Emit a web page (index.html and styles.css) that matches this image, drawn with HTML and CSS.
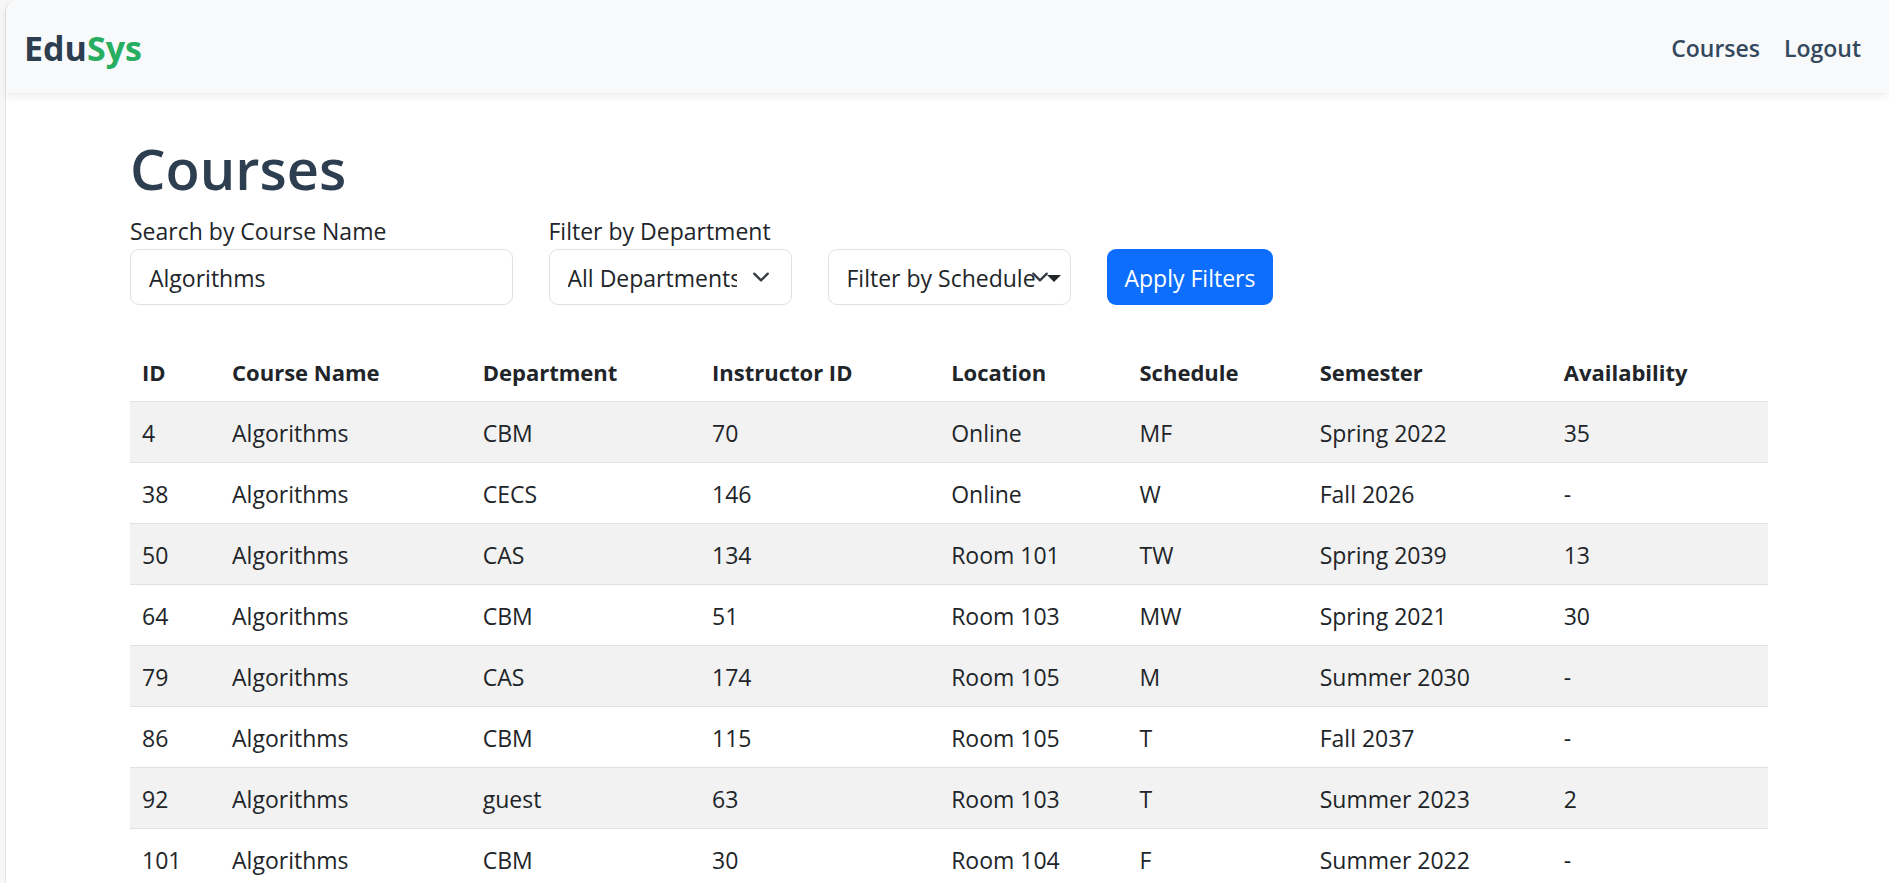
FILE: index.html
```html
<!DOCTYPE html>
<html lang="en">
<head>
<meta charset="utf-8">
<meta name="viewport" content="width=device-width, initial-scale=1">
<title>EduSys - Courses</title>
<link rel="stylesheet" href="styles.css">
</head>
<body>
<div class="page">
  <nav class="navbar">
    <a class="brand" href="#">Edu<span class="brand-accent">Sys</span></a>
    <div class="nav-links">
      <a class="nav-link" href="#">Courses</a>
      <a class="nav-link" href="#">Logout</a>
    </div>
  </nav>
  <main class="container">
    <h1 class="title">Courses</h1>
    <form class="filters">
      <div class="field field-name">
        <label for="name">Search by Course Name</label>
        <input class="control" id="name" type="text" value="Algorithms">
      </div>
      <div class="field">
        <label for="department">Filter by Department</label>
        <select class="control control-arrow" id="department">
          <option>All Departments</option>
          <option>CAS</option>
          <option>CBM</option>
          <option>CECS</option>
        </select>
      </div>
      <div class="field">
        <button class="control control-arrow schedule" type="button" aria-haspopup="true">Filter by Schedule<span class="caret"></span></button>
      </div>
      <div class="field">
        <button class="apply" type="submit">Apply Filters</button>
      </div>
    </form>
    <table class="courses">
      <colgroup>
        <col class="col-id"><col class="col-name"><col class="col-dept"><col class="col-instructor">
        <col class="col-location"><col class="col-schedule"><col class="col-semester"><col class="col-avail">
      </colgroup>
      <thead>
        <tr><th>ID</th><th>Course Name</th><th>Department</th><th>Instructor ID</th><th>Location</th><th>Schedule</th><th>Semester</th><th>Availability</th></tr>
      </thead>
      <tbody>
        <tr><td>4</td><td>Algorithms</td><td>CBM</td><td>70</td><td>Online</td><td>MF</td><td>Spring 2022</td><td>35</td></tr>
        <tr><td>38</td><td>Algorithms</td><td>CECS</td><td>146</td><td>Online</td><td>W</td><td>Fall 2026</td><td>-</td></tr>
        <tr><td>50</td><td>Algorithms</td><td>CAS</td><td>134</td><td>Room 101</td><td>TW</td><td>Spring 2039</td><td>13</td></tr>
        <tr><td>64</td><td>Algorithms</td><td>CBM</td><td>51</td><td>Room 103</td><td>MW</td><td>Spring 2021</td><td>30</td></tr>
        <tr><td>79</td><td>Algorithms</td><td>CAS</td><td>174</td><td>Room 105</td><td>M</td><td>Summer 2030</td><td>-</td></tr>
        <tr><td>86</td><td>Algorithms</td><td>CBM</td><td>115</td><td>Room 105</td><td>T</td><td>Fall 2037</td><td>-</td></tr>
        <tr><td>92</td><td>Algorithms</td><td>guest</td><td>63</td><td>Room 103</td><td>T</td><td>Summer 2023</td><td>2</td></tr>
        <tr><td>101</td><td>Algorithms</td><td>CBM</td><td>30</td><td>Room 104</td><td>F</td><td>Summer 2022</td><td>-</td></tr>
      </tbody>
    </table>
  </main>
</div>
</body>
</html>
```
FILE: styles.css
```css
* { box-sizing: border-box; }

html { background: #f7f7f7; overflow: hidden; }

body {
  margin: 0;
  padding-left: 5px;
  font-family: "Open Sans", "Noto Sans", sans-serif;
  font-size: 23px;
  line-height: 36px;
  color: #212529;
}

.page {
  background: #fff;
  border-left: 1px solid #e3e4e6;
  border-top-left-radius: 12px;
}

.navbar {
  display: flex;
  align-items: center;
  justify-content: space-between;
  padding: 21px 28px 18px 18px;
  background: #f8f9fb;
  border-top-left-radius: 12px;
  box-shadow: 0 3px 8px rgba(0, 0, 0, 0.08);
}

.brand {
  font-size: 34px;
  line-height: 54px;
  font-weight: 700;
  color: #2c3e50;
  text-decoration: none;
}

.brand-accent { color: #27ae60; }

.nav-links { display: flex; gap: 24px; }

.nav-link {
  font-weight: 600;
  color: #34495e;
  text-decoration: none;
}

.container { padding: 39px 121px 0 124px; }

.title {
  margin: 0 0 9px;
  font-size: 56px;
  line-height: 72px;
  font-weight: 600;
  color: #2c3e50;
}

.filters {
  display: grid;
  grid-template-columns: repeat(12, 1fr);
  column-gap: 36px;
  align-items: end;
  margin-bottom: 36px;
}

.field {
  grid-column: span 2;
  display: flex;
  flex-direction: column;
  align-items: flex-start;
}

.field-name { grid-column: span 3; }

.control {
  width: 100%;
  height: 56px;
  padding: 2px 18px 0;
  font: inherit;
  color: inherit;
  background-color: #fff;
  border: 1px solid #dee2e6;
  border-radius: 9px;
}

.control-arrow {
  appearance: none;
  padding-right: 54px;
  background-image: url("data:image/svg+xml,%3Csvg xmlns='http://www.w3.org/2000/svg' viewBox='0 0 16 16'%3E%3Cpath fill='none' stroke='%23343a40' stroke-linecap='round' stroke-linejoin='round' stroke-width='2' d='m2 5 6 6 6-6'/%3E%3C/svg%3E");
  background-repeat: no-repeat;
  background-position: right 18px center;
  background-size: 24px 18px;
}

.schedule {
  display: flex;
  align-items: center;
  justify-content: space-between;
  padding-right: 9px;
  white-space: nowrap;
}

.caret {
  border-top: 7px solid #212529;
  border-right: 7px solid transparent;
  border-left: 7px solid transparent;
}

.apply {
  height: 56px;
  padding: 2px 18px 0;
  font: inherit;
  color: #fff;
  background: #0d6efd;
  border: 0;
  border-radius: 9px;
  white-space: nowrap;
}

.courses {
  width: 100%;
  table-layout: fixed;
  border-collapse: separate;
  border-spacing: 0;
}

.courses th,
.courses td {
  padding: 13px 12px 11px;
  text-align: left;
  border-bottom: 1px solid #dee2e6;
}

.courses th {
  font-size: 22px;
  font-weight: 700;
}

.courses tbody tr:nth-child(odd) { background: #f2f2f2; }

.col-id { width: 5.5%; }
.col-name { width: 15.3%; }
.col-dept { width: 14%; }
.col-instructor { width: 14.6%; }
.col-location { width: 11.5%; }
.col-schedule { width: 11%; }
.col-semester { width: 14.9%; }
.col-avail { width: 13.2%; }
```
